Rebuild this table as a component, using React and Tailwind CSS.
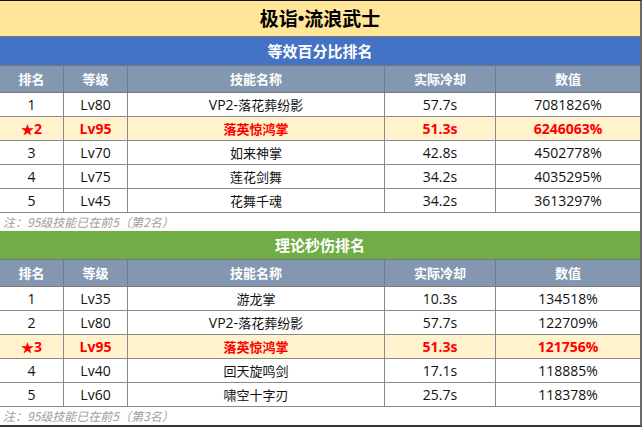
import React from "react";

const cols = "grid grid-cols-[64px_64px_257px_111px_144px]";

const sec1 = [
  ["1", "Lv80", "VP2-落花葬纷影", "57.7s", "7081826%"],
  ["★2", "Lv95", "落英惊鸿掌", "51.3s", "6246063%", true],
  ["3", "Lv70", "如来神掌", "42.8s", "4502778%"],
  ["4", "Lv75", "莲花剑舞", "34.2s", "4035295%"],
  ["5", "Lv45", "花舞千魂", "34.2s", "3613297%"],
];
const sec2 = [
  ["1", "Lv35", "游龙掌", "10.3s", "134518%"],
  ["2", "Lv80", "VP2-落花葬纷影", "57.7s", "122709%"],
  ["★3", "Lv95", "落英惊鸿掌", "51.3s", "121756%", true],
  ["4", "Lv40", "回天旋鸣剑", "17.1s", "118885%"],
  ["5", "Lv60", "啸空十字刃", "25.7s", "118378%"],
];
const heads = ["排名", "等级", "技能名称", "实际冷却", "数值"];

function Mixed({ s }) {
  const parts = s.split(/([\u2605\u3000-\u9fff\uff00-\uffef]+)/).filter(Boolean);
  return (
    <>
      {parts.map((p, i) =>
        /[\u2605\u3000-\u9fff\uff00-\uffef]/.test(p) ? (
          <span key={i} className="text-[13px] font-['Noto_Sans_CJK_SC',sans-serif]">{p}</span>
        ) : (
          <span key={i}>{p}</span>
        )
      )}
    </>
  );
}

function Header() {
  return (
    <div className={`${cols} h-[27px] bg-[#8497B0] border-b border-[#7a7a7a] text-white font-bold text-[13px] font-['Noto_Sans_CJK_SC',sans-serif]`}>
      {heads.map((h, i) => (
        <div key={i} className={`flex items-center justify-center ${i < 4 ? "border-r border-[#6f7c8e]" : ""}`}>{h}</div>
      ))}
    </div>
  );
}

function Row({ r }) {
  const hl = r[5];
  return (
    <div className={`${cols} h-[24px] border-b border-[#8a8a8a] text-[14px] leading-none ${hl ? "bg-[#FFF2CC] text-[#FF0000] font-bold" : "bg-white text-[#111]"}`}>
      {r.slice(0, 5).map((c, i) => (
        <div key={i} className={`flex items-center justify-center ${i < 4 ? "border-r border-[#8a8a8a]" : ""}`}><Mixed s={c} /></div>
      ))}
    </div>
  );
}

function Section({ title, color, rows, note }) {
  return (
    <div className="flex flex-col">
      <div className={`h-[29px] ${color} flex items-center justify-center text-white font-bold text-[15px] border-b border-[#777] font-['Noto_Sans_CJK_SC',sans-serif]`}>{title}</div>
      <Header />
      {rows.map((r, i) => <Row key={i} r={r} />)}
      <div className="h-[18px] flex items-center pl-[3px] text-[12px] italic text-[#a0a0a0] font-['Noto_Sans_CJK_SC',sans-serif]">{note}</div>
    </div>
  );
}

export default function App() {
  return (
    <div className="w-[642px] h-[427px] bg-white overflow-hidden font-['Open_Sans','Noto_Sans_CJK_SC',sans-serif]">
      <div className="flex flex-col w-[642px] border-t border-[#111] border-r-2 border-r-[#6a6a6a] border-b-2 border-b-[#333]">
        <div className="h-[36px] bg-[#FFE699] flex items-center justify-center text-[19px] font-bold text-black border-b border-[#777] font-['Noto_Sans_CJK_SC',sans-serif]">
          极诣<span className="font-['Liberation_Sans',sans-serif]">•</span>流浪武士
        </div>
        <Section title="等效百分比排名" color="bg-[#4472C4]" rows={sec1} note="注：95级技能已在前5（第2名）" />
        <Section title="理论秒伤排名" color="bg-[#70AD47]" rows={sec2} note="注：95级技能已在前5（第3名）" />
      </div>
    </div>
  );
}
